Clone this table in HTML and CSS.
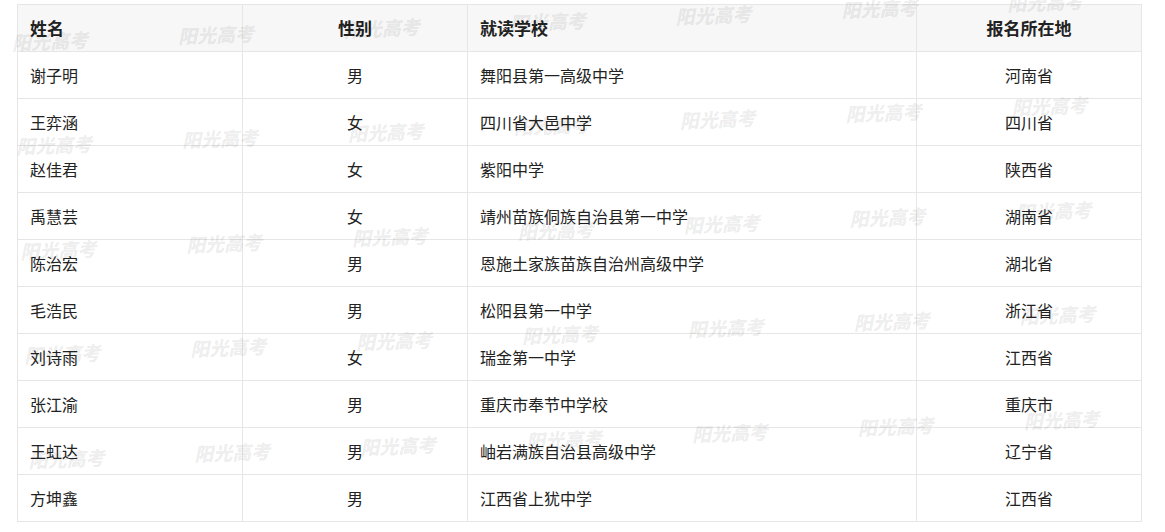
FILE: index.html
```html
<!DOCTYPE html>
<html lang="zh-CN">
<head>
<meta charset="utf-8">
<title>名单</title>
<link rel="stylesheet" href="styles.css">
</head>
<body>
<div class="page">
  <table class="list">
    <colgroup>
      <col class="c-name">
      <col class="c-sex">
      <col class="c-school">
      <col class="c-place">
    </colgroup>
    <thead>
      <tr><th class="left">姓名</th><th>性别</th><th class="left">就读学校</th><th>报名所在地</th></tr>
    </thead>
    <tbody>
      <tr><td>谢子明</td><td class="center">男</td><td>舞阳县第一高级中学</td><td class="center">河南省</td></tr>
      <tr><td>王弈涵</td><td class="center">女</td><td>四川省大邑中学</td><td class="center">四川省</td></tr>
      <tr><td>赵佳君</td><td class="center">女</td><td>紫阳中学</td><td class="center">陕西省</td></tr>
      <tr><td>禹慧芸</td><td class="center">女</td><td>靖州苗族侗族自治县第一中学</td><td class="center">湖南省</td></tr>
      <tr><td>陈治宏</td><td class="center">男</td><td>恩施土家族苗族自治州高级中学</td><td class="center">湖北省</td></tr>
      <tr><td>毛浩民</td><td class="center">男</td><td>松阳县第一中学</td><td class="center">浙江省</td></tr>
      <tr><td>刘诗雨</td><td class="center">女</td><td>瑞金第一中学</td><td class="center">江西省</td></tr>
      <tr><td>张江渝</td><td class="center">男</td><td>重庆市奉节中学校</td><td class="center">重庆市</td></tr>
      <tr><td>王虹达</td><td class="center">男</td><td>岫岩满族自治县高级中学</td><td class="center">辽宁省</td></tr>
      <tr><td>方坤鑫</td><td class="center">男</td><td>江西省上犹中学</td><td class="center">江西省</td></tr>
    </tbody>
  </table>
  <div class="watermarks" aria-hidden="true">
    <span>阳光高考</span><span>阳光高考</span><span>阳光高考</span><span>阳光高考</span><span>阳光高考</span><span>阳光高考</span><span>阳光高考</span>
    <span>阳光高考</span><span>阳光高考</span><span>阳光高考</span><span>阳光高考</span><span>阳光高考</span><span>阳光高考</span><span>阳光高考</span>
    <span>阳光高考</span><span>阳光高考</span><span>阳光高考</span><span>阳光高考</span><span>阳光高考</span><span>阳光高考</span><span>阳光高考</span>
    <span>阳光高考</span><span>阳光高考</span><span>阳光高考</span><span>阳光高考</span><span>阳光高考</span><span>阳光高考</span><span>阳光高考</span>
    <span>阳光高考</span><span>阳光高考</span><span>阳光高考</span><span>阳光高考</span><span>阳光高考</span><span>阳光高考</span><span>阳光高考</span>
  </div>
</div>
</body>
</html>
```

FILE: styles.css
```css
html, body {
  margin: 0;
  padding: 0;
  background: #fff;
}

body {
  font-family: "Noto Sans CJK SC", "Noto Sans", sans-serif;
  color: #333;
  overflow: hidden;
}

.page {
  position: relative;
  padding: 4px 0 0 17px;
  height: 528px;
}

.list {
  border-collapse: collapse;
  table-layout: fixed;
  width: 1124px;
  border: 1px solid #e6e6e6;
}

.c-name { width: 225px; }
.c-sex { width: 225px; }
.c-school { width: 449px; }
.c-place { width: 225px; }

.list th,
.list td {
  border: 1px solid #e6e6e6;
  padding: 0 12px;
  height: 46px;
  line-height: 20px;
  white-space: nowrap;
}

.list th {
  background: #f7f7f7;
  font-size: 17px;
  font-weight: bold;
  text-align: center;
  color: #222;
}

.list th.left {
  text-align: left;
}

.list td {
  font-size: 16px;
  text-align: left;
  color: #222;
}

.list td.center {
  text-align: center;
}

.watermarks {
  position: absolute;
  left: -35px;
  top: -9px;
  display: grid;
  grid-template-columns: repeat(7, 166px);
  grid-auto-rows: 104.5px;
  transform: rotate(-2.24deg);
  transform-origin: 0 0;
  pointer-events: none;
  z-index: 2;
}

.watermarks span {
  display: flex;
  align-items: center;
  justify-content: center;
  font-family: "Noto Sans CJK SC", sans-serif;
  font-size: 19px;
  font-weight: 900;
  font-style: italic;
  color: rgba(0, 0, 0, 0.085);
  letter-spacing: 0;
}
```
